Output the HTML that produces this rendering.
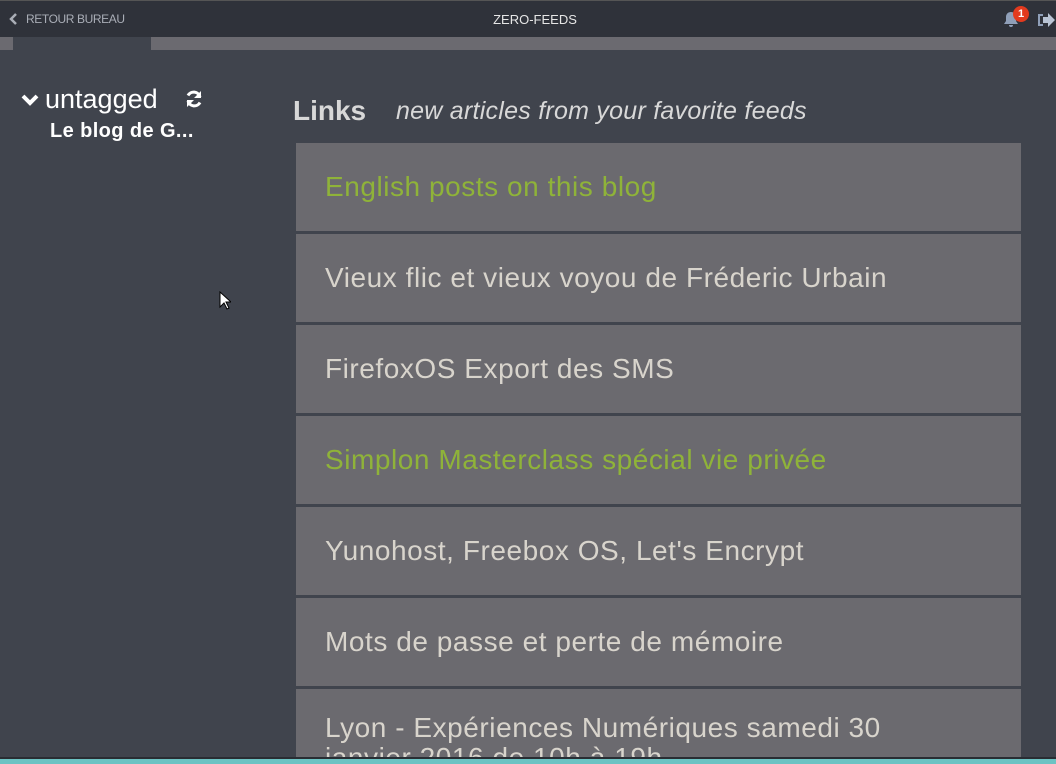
<!DOCTYPE html>
<html><head><meta charset="utf-8"><style>
*{margin:0;padding:0;box-sizing:border-box}
body{width:1056px;height:764px;overflow:hidden;background:#40444d;font-family:"Liberation Sans",sans-serif;position:relative}
.top{position:absolute;left:0;top:0;width:1056px;height:37px;background:#2f323a;border-top:1px solid #555}
.back{position:absolute;left:26px;top:11px;color:#a9adb6;font-size:12px;letter-spacing:-0.4px}
.title{position:absolute;left:0;right:0;top:11px;text-align:center;color:#e6e6e6;font-size:13px;padding-left:14px}
.strip{position:absolute;top:37px;height:13px;background:#6b6a70}
.cat{position:absolute;left:45px;top:84px;color:#fff;font-size:27px}
.feed{position:absolute;left:50px;top:120px;color:#fff;font-size:20px;font-weight:bold;letter-spacing:0.4px}
.h{position:absolute;left:293px;top:95px;color:#d8d8d8;font-size:28px;font-weight:bold}
.sub{position:absolute;left:396px;top:97px;color:#d8d8d8;font-size:25px;font-style:italic;letter-spacing:0.25px}
.card{position:absolute;left:296px;width:725px;height:88px;background:#6b6a6f;color:#d8d4cc;font-size:28px;padding:28px 0 0 29px;letter-spacing:0.55px;white-space:nowrap;overflow:hidden}
.g{color:#8fb339}
.bot{position:absolute;left:0;top:757px;width:1056px;height:7px;background:#6cc3c3;border-top:2px solid #2a2d33}
</style></head><body>
<div class="top">
<svg style="position:absolute;left:9px;top:12px" width="9" height="12" viewBox="0 0 9 12"><path d="M7 1L2 6l5 5" stroke="#a9adb6" stroke-width="2.5" fill="none"/></svg>
<div class="back">RETOUR BUREAU</div>
<div class="title">ZERO-FEEDS</div>
<svg style="position:absolute;left:1002px;top:9px" width="18" height="18" viewBox="0 0 18 18"><path d="M9 2c-3 0-5 2-5 5v4l-2 3h14l-2-3V7c0-3-2-5-5-5z M7 15a2 2 0 0 0 4 0z" fill="#8f9fb8"/></svg>
<div style="position:absolute;left:1013px;top:5px;width:16px;height:16px;border-radius:8px;background:#e23a1e;color:#fff;font-size:11px;font-weight:bold;text-align:center;line-height:16px">1</div>
<svg style="position:absolute;left:1037px;top:11px" width="18" height="16" viewBox="0 0 18 16"><path d="M1 2h5v2H3v8h3v2H1z" fill="#8f9fb8"/><path d="M6 5h5V1l7 7-7 7v-4H6z" fill="#b9c4d4"/></svg>
</div>
<div class="strip" style="left:0;width:13px"></div>
<div class="strip" style="left:151px;width:905px"></div>
<svg style="position:absolute;left:21px;top:94px" width="18" height="12" viewBox="0 0 18 12"><path d="M2 2l7 7 7-7" stroke="#fff" stroke-width="4" fill="none"/></svg>
<div class="cat">untagged</div>
<svg style="position:absolute;left:184px;top:89px" width="20" height="20" viewBox="0 0 20 20"><path d="M16 8A6.5 6.5 0 0 0 4 6.5M4 12a6.5 6.5 0 0 0 12 1.5" stroke="#fff" stroke-width="3" fill="none"/><path d="M17 2v7h-7z M3 18v-7h7z" fill="#fff"/></svg>
<div class="feed">Le blog de G...</div>
<div class="h">Links</div>
<div class="sub">new articles from your favorite feeds</div>
<div class="card g" style="top:143px">English posts on this blog</div>
<div class="card" style="top:234px">Vieux flic et vieux voyou de Fréderic Urbain</div>
<div class="card" style="top:325px">FirefoxOS Export des SMS</div>
<div class="card g" style="top:416px">Simplon Masterclass spécial vie privée</div>
<div class="card" style="top:507px">Yunohost, Freebox OS, Let's Encrypt</div>
<div class="card" style="top:598px">Mots de passe et perte de mémoire</div>
<div class="card" style="top:689px;height:75px;white-space:normal;line-height:30px;padding-top:24px">Lyon - Expériences Numériques samedi 30<br>janvier 2016 de 10h à 19h</div>
<svg style="position:absolute;left:219px;top:291px" width="12" height="19" viewBox="0 0 12 19"><path d="M1 1v15l4-4 3 6 2-1-3-6h5z" fill="#fff" stroke="#000"/></svg>
<div class="bot"></div>
</body></html>
